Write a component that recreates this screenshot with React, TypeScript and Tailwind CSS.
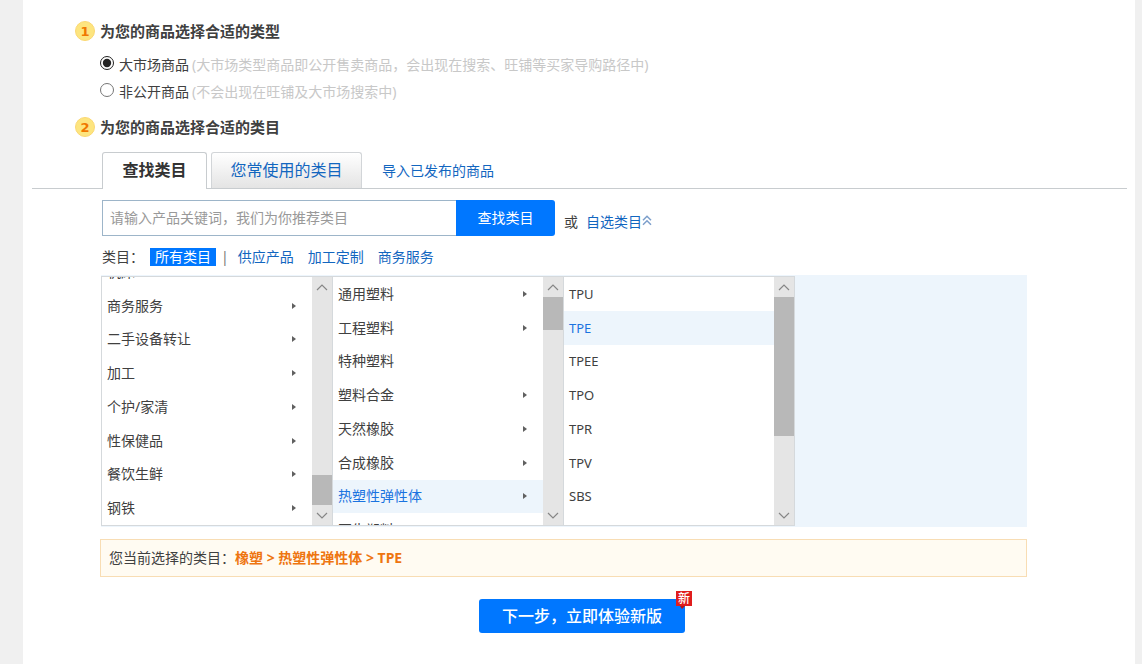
import { useState } from "react";

type Item = { label: string; more?: boolean; active?: boolean };

const industries: Item[] = [
  { label: "机床" },
  { label: "商务服务", more: true },
  { label: "二手设备转让", more: true },
  { label: "加工", more: true },
  { label: "个护/家清", more: true },
  { label: "性保健品", more: true },
  { label: "餐饮生鲜", more: true },
  { label: "钢铁", more: true },
];

const materials: Item[] = [
  { label: "通用塑料", more: true },
  { label: "工程塑料", more: true },
  { label: "特种塑料" },
  { label: "塑料合金", more: true },
  { label: "天然橡胶", more: true },
  { label: "合成橡胶", more: true },
  { label: "热塑性弹性体", more: true, active: true },
  { label: "再生塑料" },
];

const products: Item[] = [
  { label: "TPU" },
  { label: "TPE", active: true },
  { label: "TPEE" },
  { label: "TPO" },
  { label: "TPR" },
  { label: "TPV" },
  { label: "SBS" },
];

function StepTitle({ step, children }: { step: number; children: string }) {
  return (
    <h2 className="flex items-center gap-[5px] text-[15px] leading-5 font-bold text-[#404040]">
      <span className="flex size-5 items-center justify-center rounded-full border border-[#fbd873] bg-[#fde57f] font-['DejaVu_Sans',sans-serif] text-[13px] leading-none text-[#f07800]">
        {step}
      </span>
      {children}
    </h2>
  );
}

function ScrollArrow({ up }: { up?: boolean }) {
  return (
    <button type="button" aria-label={up ? "向上滚动" : "向下滚动"} className="flex h-5 w-full shrink-0 items-center justify-center">
      <svg width="12" height="7" viewBox="0 0 12 7" fill="none" stroke="#868686" strokeWidth="1.2">
        <path d={up ? "M1 6 6 1l5 5" : "M1 1l5 5 5-5"} />
      </svg>
    </button>
  );
}

function Column({ items, thumb, atEnd }: { items: Item[]; thumb: string; atEnd?: boolean }) {
  return (
    <div className="flex h-[250px] w-[231px] border-y border-r border-[#d5d9dc] bg-white">
      <div className={`flex h-full min-w-0 flex-1 flex-col overflow-hidden ${atEnd ? "justify-end" : ""}`}>
        <ul className="grid h-[270px] shrink-0 grid-rows-8">
          {items.map((item) => (
            <li key={item.label}>
              <a
                href="#"
                className={`flex h-full items-center justify-between pr-4 pl-[5px] ${
                  item.active ? "bg-[#edf5fc] text-[#1a73e0]" : "text-[#404040]"
                }`}
              >
                <span>{item.label}</span>
                {item.more && (
                  <svg width="4" height="6" viewBox="0 0 4 6" fill="#606060">
                    <path d="M0 0 4 3 0 6z" />
                  </svg>
                )}
              </a>
            </li>
          ))}
        </ul>
      </div>
      <div className="flex w-5 flex-col bg-[#e5e5e5]">
        <ScrollArrow up />
        <div className={`flex flex-1 flex-col ${atEnd ? "justify-end" : ""}`}>
          <div className={`bg-[#b8b8b8] ${thumb}`} />
        </div>
        <ScrollArrow />
      </div>
    </div>
  );
}

export default function App() {
  const [kind, setKind] = useState("market");
  return (
    <div className="min-h-screen bg-[#f0f0f0] pr-[7px] pl-[23px] font-['Noto_Sans','Noto_Sans_CJK_SC',sans-serif] text-[14px] leading-5 text-[#404040]">
      <main className="min-h-screen bg-white pt-[21px] pr-2 pl-[9px]">
        <section className="pl-[43px]">
          <StepTitle step={1}>为您的商品选择合适的类型</StepTitle>
          <div className="flex flex-col gap-[7px] pt-[14px] pl-[25px]">
            <label className="flex items-center">
              <input type="radio" name="kind" checked={kind === "market"} onChange={() => setKind("market")} className="mr-[5px] mb-1 size-[14px] accent-[#222222]" />
              大市场商品
              <span className="ml-[3px] text-[#c8c8c8]">(大市场类型商品即公开售卖商品，会出现在搜索、旺铺等买家导购路径中)</span>
            </label>
            <label className="flex items-center">
              <input type="radio" name="kind" checked={kind === "private"} onChange={() => setKind("private")} className="mr-[5px] mb-1 size-[14px] accent-[#222222]" />
              非公开商品
              <span className="ml-[3px] text-[#c8c8c8]">(不会出现在旺铺及大市场搜索中)</span>
            </label>
          </div>
        </section>

        <section className="pt-[15px]">
          <div className="pl-[43px]">
            <StepTitle step={2}>为您的商品选择合适的类目</StepTitle>
          </div>

          <nav className="mt-[15px] flex h-[37px] border-b border-[#c8cccf] pl-[70px]">
            <a href="#" className="-mb-px flex w-[105px] items-center justify-center rounded-t-[3px] border border-b-0 border-[#c8cccf] bg-white pb-[3px] text-base font-bold text-[#333333]">
              查找类目
            </a>
            <a href="#" className="ml-1 flex w-[151px] items-center justify-center rounded-t-[3px] border border-b-0 border-[#d2d5d8] bg-linear-to-b from-white to-[#e4e4e4] pb-[2px] text-base text-[#1266bf]">
              您常使用的类目
            </a>
            <a href="#" className="ml-5 flex items-center pt-[2px] text-[#1266bf]">导入已发布的商品</a>
          </nav>

          <div className="mt-[11px] mr-[100px] ml-[70px]">
            <form className="flex items-center" onSubmit={(e) => e.preventDefault()}>
              <input
                type="text"
                aria-label="产品关键词"
                placeholder="请输入产品关键词，我们为你推荐类目"
                className="h-9 w-[354px] border border-r-0 border-[#9db5c9] px-[7px] pb-[2px] placeholder:text-[#999999]"
              />
              <button type="submit" className="h-9 w-[99px] rounded-r-[3px] bg-[#0077ff] text-white">查找类目</button>
              <span className="mt-2 ml-[9px]">或</span>
              <a href="#" className="mt-2 ml-2 flex items-center text-[#1266bf]">
                自选类目
                <svg className="mb-[3px]" width="10" height="11" viewBox="0 0 10 11" fill="none" stroke="#7c9fcb" strokeWidth="1.5">
                  <path d="M1 5.2 5 1.2l4 4M1 9.8l4-4 4 4" />
                </svg>
              </a>
            </form>

            <div className="mt-[11px] flex items-center text-[#1266bf]">
              <span className="text-[#404040]">类目：</span>
              <a href="#" className="ml-[6px] flex h-[18px] items-center bg-[#0077ff] px-[5px] text-white">所有类目</a>
              <span className="mx-[5px] text-[#777777]">|</span>
              <div className="flex gap-[14px] pl-1">
                <a href="#">供应产品</a>
                <a href="#">加工定制</a>
                <a href="#">商务服务</a>
              </div>
            </div>
          </div>

          <div className="mt-2 mr-[100px] ml-[69px] flex bg-[#edf5fc] py-px">
            <div className="flex border-l border-[#d5d9dc]">
              <Column items={industries} thumb="h-[30px]" atEnd />
              <Column items={materials} thumb="h-[33px]" />
              <div className="flex text-[13px]">
                <Column items={products} thumb="h-[139px]" />
              </div>
            </div>
          </div>

          <p className="mt-3 mr-[100px] ml-[68px] flex h-[38px] items-center border border-[#f8ddb4] bg-[#fffbf2] px-2">
            您当前选择的类目：
            <strong className="text-[#ee7510]">橡塑 &gt; 热塑性弹性体 &gt; TPE</strong>
          </p>

          <div className="mt-[22px] flex pl-[447px]">
            <button type="button" className="relative h-[34px] w-[206px] rounded-[3px] bg-[#0077ff] text-base font-medium text-white">
              下一步，立即体验新版
              <span className="absolute -top-2 -right-[7px] flex h-[15px] w-4 items-center justify-center bg-[#e01d1d] text-xs leading-none">
                新
                <svg className="absolute top-[15px] left-1" width="5" height="3" viewBox="0 0 5 3" fill="#b81414">
                  <path d="M0 0h5L2 3z" />
                </svg>
              </span>
            </button>
          </div>
        </section>
      </main>
    </div>
  );
}
